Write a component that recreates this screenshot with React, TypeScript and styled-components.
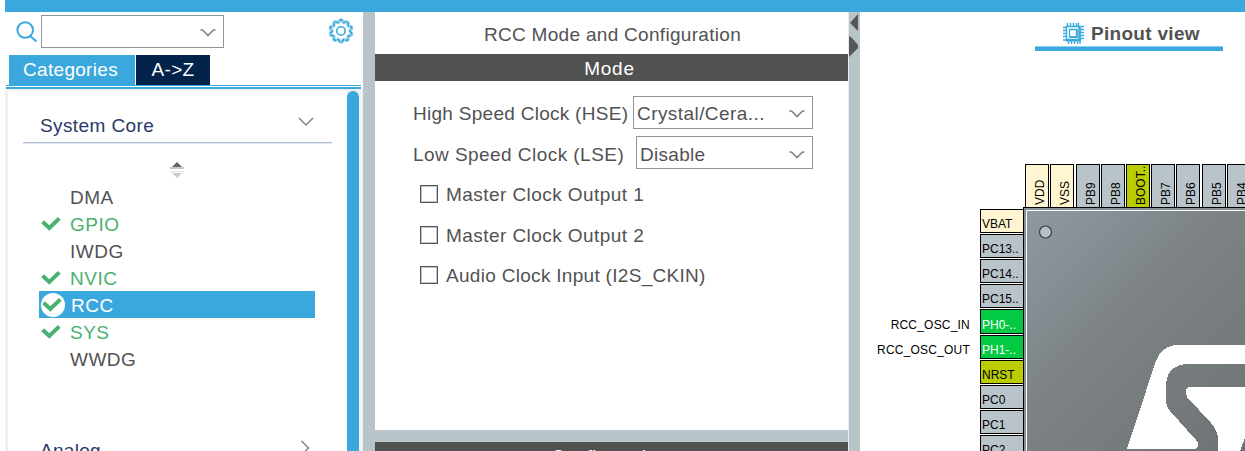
import React from "react";
import styled, { createGlobalStyle } from "styled-components";

const c = {
  blue: "#3aa8dc",
  navy: "#03234b",
  heading: "#28396a",
  text: "#525254",
  green: "#49b170",
  bar: "#505250",
  strip: "#b8c4ca",
};

const Global = createGlobalStyle`
  * { box-sizing: border-box; }
  body { margin: 0; background: #fff; overflow: hidden; font-family: "Liberation Sans", Arial, sans-serif; }
`;

const Page = styled.div`
  width: 1245px;
  height: 451px;
  overflow: hidden;
  display: flex;
  flex-direction: column;
  padding-left: 5px;
  color: ${c.text};
  font-size: 19px;
`;
const TopBar = styled.div`
  height: 12px;
  flex: none;
  background: ${c.blue};
`;
const Columns = styled.div`
  display: flex;
  height: 439px;
`;
const Label = styled.span<{ $ls?: number }>`
  white-space: pre;
  letter-spacing: ${(p) => p.$ls ?? 0.3}px;
`;

/* Category panel */
const Sidebar = styled.aside`
  width: 358px;
  flex: none;
`;
const SearchRow = styled.div`
  display: flex;
  height: 43px;
  padding: 3px 0 0 11px;
`;
const SearchIcon = styled.svg`
  width: 22px;
  height: 22px;
  margin: 6px 3px 0 0;
`;
const Field = styled.div<{ $w: number; $drop?: number }>`
  width: ${(p) => p.$w}px;
  height: 33px;
  flex: none;
  border: 1px solid #8d959d;
  display: flex;
  align-items: center;
  justify-content: space-between;
  padding: ${(p) => 2 + (p.$drop ?? 0)}px 7px 0 3px;
`;
const Chevron = styled.svg`
  width: 16px;
  height: 10px;
  flex: none;
  margin-left: auto;
`;
const Gear = styled.svg`
  width: 26px;
  height: 26px;
  margin: 3px 0 0 104px;
`;
const Tabs = styled.div`
  display: flex;
  gap: 1px;
  height: 30px;
  padding-left: 4px;
`;
const Tab = styled.div<{ $w: number; $dark?: boolean }>`
  width: ${(p) => p.$w}px;
  display: flex;
  align-items: center;
  justify-content: center;
  padding-right: ${(p) => (p.$dark ? 0 : 3)}px;
  color: #fff;
  background: ${(p) => (p.$dark ? c.navy : c.blue)};
`;
const Rules = styled.div`
  height: 4px;
  margin: 0 2px 0 1px;
  border-top: 1px solid ${c.blue};
  border-bottom: 2px solid ${c.blue};
`;
const TreeFrame = styled.div`
  display: flex;
  height: 362px;
  border-left: 3px solid #f0f0f0;
  border-top: 2px solid #f0f0f0;
  overflow: hidden;
`;
const Tree = styled.div`
  width: 339px;
  padding-left: 15px;
`;
const ScrollTrack = styled.div`
  width: 16px;
  background: #f0f3f4;
`;
const ScrollThumb = styled.div`
  width: 12px;
  height: 380px;
  background: ${c.blue};
  border-radius: 6px;
`;
const GroupHead = styled.div`
  width: 309px;
  display: flex;
  justify-content: space-between;
  height: 53px;
  padding: 24px 18px 0 17px;
  color: ${c.heading};
  line-height: 22px;
  border-bottom: 1px solid #e0e5f2;
  box-shadow: inset 0 -1px #b4bfd4;
`;
const GroupChevron = styled(Chevron)`
  margin-top: 2px;
`;
const SortRow = styled.div`
  height: 39px;
  padding: 17px 0 0 147px;
  line-height: 0;
`;
const Item = styled.div<{ $on?: boolean; $sel?: boolean }>`
  display: flex;
  align-items: center;
  width: 276px;
  height: 27px;
  margin-left: 16px;
  padding-left: ${(p) => (p.$sel ? 2 : 1)}px;
  color: ${(p) => (p.$sel ? "#fff" : p.$on ? c.green : c.text)};
  background: ${(p) => (p.$sel ? c.blue : "transparent")};
  > span { padding-top: 2px; }
`;
const Mark = styled.svg`
  width: 24px;
  height: 24px;
  margin-right: 6px;
  flex: none;
`;
const Gap = styled.div`
  height: 44px;
`;

/* Mode panel */
const Divider = styled.div<{ $light?: boolean }>`
  width: 12px;
  flex: none;
  background: ${c.strip};
  border-left: ${(p) => (p.$light ? "1px solid #e8ebed" : "0")};
`;
const Middle = styled.main`
  width: 473px;
  flex: none;
`;
const Title = styled.div`
  height: 42px;
  display: flex;
  align-items: center;
  justify-content: center;
  padding: 3px 0 0 2px;
`;
const SectionBar = styled.div<{ $drop?: number }>`
  height: 27px;
  display: flex;
  align-items: center;
  justify-content: center;
  padding: ${(p) => 2 + (p.$drop ?? 0)}px 4px 0 0;
  color: #fff;
  background: ${c.bar};
`;
const Form = styled.div`
  height: 349px;
  padding: 15px 35px 0 38px;
`;
const FormRow = styled.div<{ $drop?: number }>`
  display: flex;
  align-items: center;
  justify-content: space-between;
  height: 33px;
  margin-bottom: 7px;
  > span { padding-top: ${(p) => 2 + (p.$drop ?? 0)}px; }
`;
const CheckRow = styled.div`
  display: flex;
  align-items: center;
  height: 40.5px;
  padding: 0 0 4px 7px;
  gap: 8px;
  > span { padding-top: 2px; }
`;
const Box = styled.i`
  width: 18px;
  height: 18px;
  border: 1px solid #555557;
  box-shadow: inset 0 0 0 1px #c4c4c6;
`;
const Splitter = styled.div`
  height: 12px;
  background: ${c.strip};
`;

/* Pinout panel */
const Pinout = styled.section`
  width: 385px;
  flex: none;
  overflow: hidden;
`;
const ViewHeader = styled.div`
  height: 152px;
  padding-left: 175px;
`;
const ViewTab = styled.div`
  width: 188px;
  height: 39px;
  display: flex;
  align-items: center;
  padding: 7px 0 0 28px;
  gap: 7px;
  font-weight: bold;
  border-bottom: 4px solid ${c.blue};
  box-shadow: inset 0 -1px #8ccdec;
  > span { padding-top: 2px; }
`;
const TopPins = styled.div`
  display: flex;
  height: 43px;
  padding-left: 165px;
`;
const tones = {
  gray: ["#b9c4ca", "#000"],
  cream: ["#fff5d0", "#000"],
  lime: ["#bbcc00", "#000"],
  green: ["#02cb43", "#fff"],
};
type Tone = keyof typeof tones;
const TopPin = styled.div<{ $tone: Tone; $gap?: number }>`
  width: 24px;
  flex: none;
  margin-right: ${(p) => p.$gap ?? 1}px;
  border: solid #000;
  border-width: 0 1px 1px;
  background: ${(p) => tones[p.$tone][0]};
  writing-mode: vertical-rl;
  transform: rotate(180deg);
  line-height: 28px;
  padding-top: 2px;
  font-size: 12px;
  white-space: nowrap;
  color: #000;
`;
const ChipRow = styled.div`
  display: flex;
  height: 244px;
`;
const Signals = styled.div`
  width: 120px;
  flex: none;
  padding: 105.5px 10px 0 0;
  text-align: right;
  font-size: 12px;
  line-height: 25px;
  color: #000;
`;
const Pins = styled.div`
  width: 43px;
  flex: none;
  padding-top: 2px;
`;
const Pin = styled.div<{ $tone: Tone; $extra?: number }>`
  height: ${(p) => 24 + (p.$extra ?? 0)}px;
  margin-bottom: 1px;
  border: 1px solid #000;
  border-right: 0;
  padding: ${(p) => 3 + (p.$extra ?? 0)}px 0 0 1px;
  line-height: 22px;
  font-size: 12px;
  white-space: nowrap;
  background: ${(p) => tones[p.$tone][0]};
  color: ${(p) => tones[p.$tone][1]};
`;
const Chip = styled.div`
  width: 240px;
  height: 260px;
  flex: none;
  border: solid #000;
  border-width: 1px 0 0 1px;
  padding: 2px 0 0 2px;
  background: #879197;
`;
const Die = styled.div`
  height: 260px;
  border: solid #fff;
  border-width: 1px 0 0 1px;
  background: linear-gradient(135deg, #8f989f 0, #858e94 75px, #7e8486 130px, #767b7d 225px, #6b7173 345px);
`;

const CheckMark = ({ on, sel }: { on?: boolean; sel?: boolean }) => (
  <Mark viewBox="0 0 24 24">
    {sel && <circle cx="12" cy="12" r="12" fill="#fff" />}
    {(on || sel) && <path d="M2.6 9.8L9.3 15.9L19.3 6.4" fill="none" stroke={c.green} strokeWidth="4" />}
  </Mark>
);

const Down = () => (
  <Chevron viewBox="0 0 16 10">
    <path d="M.5 1.8L3 2.4L8 7.5L13 2.4L15.5 1.8" fill="none" stroke="#858587" strokeWidth="1.6" />
  </Chevron>
);

const gearPath =
  Array.from({ length: 120 }, (_, i) => {
    const a = (i / 120) * Math.PI * 2;
    const r = 10.1 + 1.1 * Math.cos(a * 10 + Math.PI);
    return `${i ? "L" : "M"}${(13 + r * Math.cos(a)).toFixed(2)} ${(13 + r * Math.sin(a)).toFixed(2)}`;
  }).join("") + "Z";

const items = [
  { name: "DMA" },
  { name: "GPIO", on: true },
  { name: "IWDG" },
  { name: "NVIC", on: true },
  { name: "RCC", sel: true },
  { name: "SYS", on: true },
  { name: "WWDG" },
];

const topPins: [string, Tone, number?][] = [
  ["VDD", "cream"], ["VSS", "cream", 2], ["PB9", "gray"], ["PB8", "gray"], ["BOOT..", "lime"],
  ["PB7", "gray"], ["PB6", "gray", 2], ["PB5", "gray"], ["PB4", "gray"],
];
const leftPins: [string, Tone, number?][] = [
  ["VBAT", "cream"], ["PC13..", "gray"], ["PC14..", "gray"], ["PC15..", "gray"], ["PH0-..", "green", 1],
  ["PH1-..", "green"], ["NRST", "lime"], ["PC0", "gray"], ["PC1", "gray"], ["PC2", "gray"],
];

export default function App() {
  return (
    <Page>
      <Global />
      <TopBar />
      <Columns>
        <Sidebar>
          <SearchRow>
            <SearchIcon viewBox="0 0 22 22" fill="none" stroke={c.blue}>
              <circle cx="9.2" cy="9" r="7.8" strokeWidth="2" />
              <path d="M13.5 14.5L20.5 20.5" strokeWidth="2" />
            </SearchIcon>
            <Field $w={183}><Down /></Field>
            <Gear viewBox="0 0 26 26" fill="none" stroke={c.blue}>
              <path d={gearPath} strokeWidth="3.4" strokeOpacity=".45" />
              <path d={gearPath} strokeWidth="1.7" strokeDasharray="4 1.2" />
              <circle cx="13" cy="13" r="4.2" strokeWidth="1.6" />
            </Gear>
          </SearchRow>
          <Tabs>
            <Tab $w={126}><Label>Categories</Label></Tab>
            <Tab $w={74} $dark><Label>A-&gt;Z</Label></Tab>
          </Tabs>
          <Rules />
          <TreeFrame>
            <Tree>
              <GroupHead>
                <Label $ls={0.4}>System Core</Label>
                <GroupChevron viewBox="0 0 16 10">
                  <path d="M1 1L8 8L15 1" fill="none" stroke="#858587" strokeWidth="1.5" />
                </GroupChevron>
              </GroupHead>
              <SortRow>
                <svg width="14" height="18">
                  <path d="M7 1L12 6H2Z" fill="#666" />
                  <path d="M0 7H14" stroke="#c8c8c8" strokeWidth="2" />
                  <path d="M0 10.5H14" stroke="#e4e4e4" />
                  <path d="M2 12H12L7 17Z" fill="#ccc" />
                </svg>
              </SortRow>
              {items.map((it) => (
                <Item key={it.name} $on={it.on} $sel={it.sel}>
                  <CheckMark on={it.on} sel={it.sel} />
                  <Label $ls={0.5}>{it.name}</Label>
                </Item>
              ))}
              <Gap />
              <GroupHead>
                <Label>Analog</Label>
                <svg width="14" height="18">
                  <path d="M1.5 1L8.5 8L1.5 15" fill="none" stroke="#858587" strokeWidth="1.5" />
                </svg>
              </GroupHead>
            </Tree>
            <ScrollTrack><ScrollThumb /></ScrollTrack>
          </TreeFrame>
        </Sidebar>
        <Divider />
        <Middle>
          <Title><Label>RCC Mode and Configuration</Label></Title>
          <SectionBar><Label $ls={0.7}>Mode</Label></SectionBar>
          <Form>
            <FormRow>
              <Label $ls={0.28}>High Speed Clock (HSE)</Label>
              <Field $w={180}><Label $ls={0.43}>Crystal/Cera...</Label><Down /></Field>
            </FormRow>
            <FormRow $drop={2}>
              <Label $ls={0.45}>Low Speed Clock (LSE)</Label>
              <Field $w={177} $drop={2}><Label>Disable</Label><Down /></Field>
            </FormRow>
            <CheckRow><Box /><Label $ls={0.44}>Master Clock Output 1</Label></CheckRow>
            <CheckRow><Box /><Label $ls={0.44}>Master Clock Output 2</Label></CheckRow>
            <CheckRow><Box /><Label>Audio Clock Input (I2S_CKIN)</Label></CheckRow>
          </Form>
          <Splitter />
          <SectionBar $drop={0.5}><Label>Configuration</Label></SectionBar>
        </Middle>
        <Divider $light>
          <svg width="11" height="50">
            <path d="M9 2V19L1 11Z" fill="#565658" />
            <path d="M0 24L3 26L9 33V36L3 42L0 45Z" fill="#565658" />
          </svg>
        </Divider>
        <Pinout>
          <ViewHeader>
            <ViewTab>
              <svg width="21" height="21" fill="none" stroke={c.blue}>
                <path d="M3.5 3.5H17V17.5H3.5Z" strokeWidth="1.4" />
                <path d="M16.5 4V18M3 17H18" strokeWidth="2.4" />
                <path d="M6.5 6.5H14V14H6.5Z" strokeWidth="1.3" />
                <path d="M13.7 7V14.2H7" strokeWidth="1.8" />
                <path d="M4.5 0V3M7.5 0V3M10.5 0V3M13.5 0V3M15.5 0V3M5.5 18V21M8.5 18V21M11.5 18V21M14.5 18V21M17 18V21" strokeWidth="1.4" />
                <path d="M0 4.5H3M0 7.5H3M0 10.5H3M0 13.5H3M0 17H3M18 3.5H21M18 6.5H21M18 9.5H21M18 12.5H21M18 15.5H21" strokeWidth="1.4" />
              </svg>
              <Label>Pinout view</Label>
            </ViewTab>
          </ViewHeader>
          <TopPins>
            {topPins.map(([n, t, g]) => (
              <TopPin key={n} $tone={t} $gap={g}>{n}</TopPin>
            ))}
          </TopPins>
          <ChipRow>
            <Signals>
              <div><Label $ls={0.2}>RCC_OSC_IN</Label></div>
              <div><Label $ls={0.2}>RCC_OSC_OUT</Label></div>
            </Signals>
            <Pins>
              {leftPins.map(([n, t, x]) => (
                <Pin key={n} $tone={t} $extra={x}>{n}</Pin>
              ))}
            </Pins>
            <Chip>
              <Die>
                <svg width="218" height="240" viewBox="1027 211 218 240">
                  <circle cx="1045.5" cy="232" r="6" fill="#b4c0c6" stroke="#3c4144" strokeWidth="1.2" />
                  <g fill="#fff" shapeRendering="crispEdges">
                    <path d="M1127 449L1155.5 362Q1162 345 1178 345H1245V364H1187Q1166 365 1166 387V401Q1166 406 1170 411L1196 440Q1200 444 1196 449Z" />
                    <path d="M1245 387H1189Q1184 389 1187 397L1211 423Q1218 431 1218 440V451H1240L1245 438Z" />
                  </g>
                </svg>
              </Die>
            </Chip>
          </ChipRow>
        </Pinout>
      </Columns>
    </Page>
  );
}
